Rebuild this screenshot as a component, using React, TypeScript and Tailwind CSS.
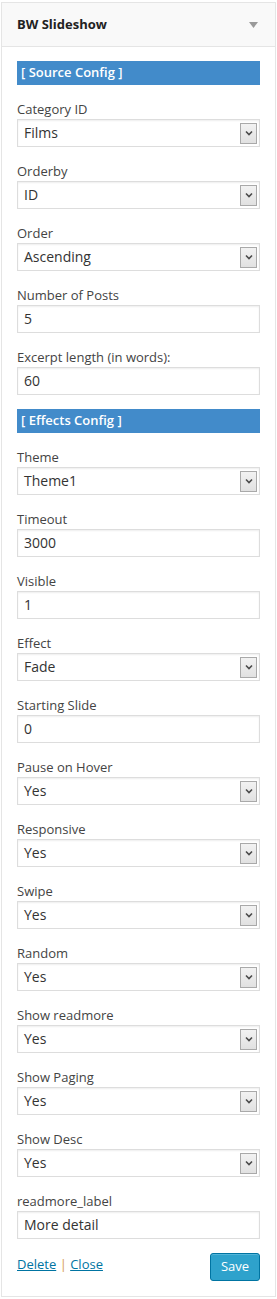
import React from "react";

type Field = { label: string; value: string; kind: "select" | "input" };

const source: Field[] = [
  { label: "Category ID", value: "Films", kind: "select" },
  { label: "Orderby", value: "ID", kind: "select" },
  { label: "Order", value: "Ascending", kind: "select" },
  { label: "Number of Posts", value: "5", kind: "input" },
  { label: "Excerpt length (in words):", value: "60", kind: "input" },
];

const effects: Field[] = [
  { label: "Theme", value: "Theme1", kind: "select" },
  { label: "Timeout", value: "3000", kind: "input" },
  { label: "Visible", value: "1", kind: "input" },
  { label: "Effect", value: "Fade", kind: "select" },
  { label: "Starting Slide", value: "0", kind: "input" },
  { label: "Pause on Hover", value: "Yes", kind: "select" },
  { label: "Responsive", value: "Yes", kind: "select" },
  { label: "Swipe", value: "Yes", kind: "select" },
  { label: "Random", value: "Yes", kind: "select" },
  { label: "Show readmore", value: "Yes", kind: "select" },
  { label: "Show Paging", value: "Yes", kind: "select" },
  { label: "Show Desc", value: "Yes", kind: "select" },
  { label: "readmore_label", value: "More detail", kind: "input" },
];

function Control({ f }: { f: Field }) {
  return (
    <div className="flex flex-col">
      <div className="mt-[14px] h-[20px] text-[13px] leading-[20px] text-[#444]">{f.label}</div>
      <div className="flex h-[28px] items-center border border-[#dddddd] bg-white shadow-[inset_0_1px_2px_rgba(0,0,0,0.07)]">
        <div className="flex-1 pl-[6px] text-[14px] leading-[20px] text-[#333]">{f.value}</div>
        {f.kind === "select" && (
          <div className="mr-[2px] flex h-[21px] w-[17px] items-center justify-center border border-[#a9a9a9] bg-gradient-to-b from-[#f2f2f2] to-[#e1e1e1]">
            <svg width="8" height="6" viewBox="0 0 8 6">
              <path d="M1 1.5 L4 4.5 L7 1.5" fill="none" stroke="#4a4a4a" strokeWidth="1.6" />
            </svg>
          </div>
        )}
      </div>
    </div>
  );
}

function Bar({ text }: { text: string }) {
  return (
    <div className="flex h-[24px] items-center bg-[#428bca] pl-[4px] text-[13px] font-semibold text-white">
      {text}
    </div>
  );
}

export default function App() {
  return (
    <div
      className="w-[277px] bg-white pl-[1px] pt-[2px]"
      style={{ fontFamily: '"Open Sans", "Noto Sans", sans-serif' }}
    >
      <div className="w-[275px] border border-[#e5e5e5] bg-white">
        <div className="flex h-[44px] items-center justify-between border-b border-[#e5e5e5] bg-[#f9f9f9] pl-[15px] pr-[17px]">
          <span className="text-[13px] font-bold text-[#222]">BW Slideshow</span>
          <svg width="9" height="6" viewBox="0 0 9 6">
            <path d="M0 0 L9 0 L4.5 6 Z" fill="#9a9a9a" />
          </svg>
        </div>
        <div className="px-[15px] pb-[15px] pt-[14px]">
          <Bar text="[ Source Config ]" />
          {source.map((f) => (
            <Control key={f.label} f={f} />
          ))}
          <div className="mt-[14px]">
            <Bar text="[ Effects Config ]" />
          </div>
          {effects.map((f) => (
            <Control key={f.label} f={f} />
          ))}
          <div className="mt-[14px] flex items-start justify-between">
            <div className="pt-[1px] text-[13px] leading-[20px] text-[#0074a2]">
              <a className="underline">Delete</a>
              <span className="text-[#d69b4b]"> | </span>
              <a className="underline">Close</a>
            </div>
            <button className="h-[28px] w-[50px] rounded-[3px] border border-[#0074a2] bg-[#2ea2cc] text-[13px] text-white shadow-[inset_0_1px_0_rgba(120,200,230,0.5)]">
              Save
            </button>
          </div>
        </div>
      </div>
    </div>
  );
}
